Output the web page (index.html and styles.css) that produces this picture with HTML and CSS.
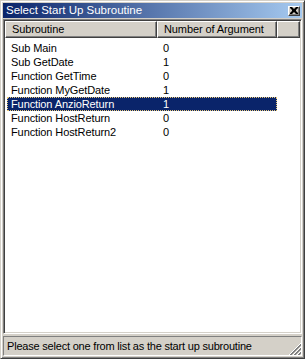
FILE: index.html
```html
<!DOCTYPE html>
<html lang="en-US">
  <head>
    <meta charset="UTF-8">
    <title>Select Start Up Subroutine</title>
    <link rel="stylesheet" href="styles.css">
  </head>
  <body>
    <div class="window">
      <div class="titlebar">
        <span class="title">Select Start Up Subroutine</span>
        <span class="close" aria-label="Close">
          <svg width="8" height="7" viewBox="0 0 8 7">
            <path d="M0 0h2l2 2 2-2h2v1l-2 2v1l2 2v1h-2l-2-2-2 2h-2v-1l2-2v-1l-2-2z" fill="#000"/>
          </svg>
        </span>
      </div>
      <div class="list">
        <div class="list-head">
          <div class="col col-name">Subroutine</div>
          <div class="col col-args">Number of Argument</div>
          <div class="col col-fill"></div>
        </div>
        <ul class="rows">
          <li class="row"><span class="cell-name">Sub Main</span><span class="cell-args">0</span></li>
          <li class="row"><span class="cell-name">Sub GetDate</span><span class="cell-args">1</span></li>
          <li class="row"><span class="cell-name">Function GetTime</span><span class="cell-args">0</span></li>
          <li class="row"><span class="cell-name">Function MyGetDate</span><span class="cell-args">1</span></li>
          <li class="row selected"><span class="cell-name">Function AnzioReturn</span><span class="cell-args">1</span></li>
          <li class="row"><span class="cell-name">Function HostReturn</span><span class="cell-args">0</span></li>
          <li class="row"><span class="cell-name">Function HostReturn2</span><span class="cell-args">0</span></li>
        </ul>
      </div>
      <div class="statusbar">
        <span class="status-text">Please select one from list as the start up subroutine</span>
        <!-- size grip -->
        <svg class="grip" width="12" height="12" viewBox="0 0 12 12" shape-rendering="crispEdges">
          <path d="M11 0h1v1h-1zM10 1h1v1h-1zM9 2h1v1h-1zM8 3h1v1h-1zM7 4h1v1h-1zM6 5h1v1h-1zM5 6h1v1h-1zM4 7h1v1h-1zM3 8h1v1h-1zM2 9h1v1h-1zM1 10h1v1h-1zM0 11h1v1h-1z" fill="#fff"/>
          <path d="M11 1h1v2h-1zM10 2h1v2h-1zM9 3h1v2h-1zM8 4h1v2h-1zM7 5h1v2h-1zM6 6h1v2h-1zM5 7h1v2h-1zM4 8h1v2h-1zM3 9h1v2h-1zM2 10h1v2h-1zM1 11h1v1h-1z" fill="#808080"/>
          <path d="M11 4h1v1h-1zM10 5h1v1h-1zM9 6h1v1h-1zM8 7h1v1h-1zM7 8h1v1h-1zM6 9h1v1h-1zM5 10h1v1h-1zM4 11h1v1h-1z" fill="#fff"/>
          <path d="M11 5h1v2h-1zM10 6h1v2h-1zM9 7h1v2h-1zM8 8h1v2h-1zM7 9h1v2h-1zM6 10h1v2h-1zM5 11h1v1h-1z" fill="#808080"/>
          <path d="M11 8h1v1h-1zM10 9h1v1h-1zM9 10h1v1h-1zM8 11h1v1h-1z" fill="#fff"/>
          <path d="M11 9h1v2h-1zM10 10h1v2h-1zM9 11h1v1h-1z" fill="#808080"/>
        </svg>
      </div>
    </div>
  </body>
</html>
```

FILE: styles.css
```css
body {
  margin: 0;
  padding: 0;
  background-color: #d4d0c8;
  font-family: "Liberation Sans", Arial, sans-serif;
  font-size: 11px;
  color: black;
}
.window {
  box-sizing: border-box;
  width: 305px;
  height: 359px;
  display: flex;
  flex-direction: column;
  padding: 2px;
  background: #d4d0c8;
  border: 1px solid;
  border-color: #d4d0c8 #404040 #404040 #d4d0c8;
  box-shadow: inset 1px 1px #fff, inset -1px -1px #808080;
}
.titlebar {
  height: 15px;
  display: flex;
  align-items: center;
  justify-content: space-between;
  padding: 0 2px 0 3px;
  background: linear-gradient(to right, #0a246a, #a6caf0);
  color: white;
}
.title {
  font-size: 11.5px;
  line-height: 15px;
}
.close {
  box-sizing: border-box;
  width: 12px;
  height: 10px;
  display: flex;
  align-items: center;
  justify-content: center;
  background: #d4d0c8;
  border: 1px solid;
  border-color: #fff #404040 #404040 #fff;
  box-shadow: inset -1px -1px #808080;
}
.list {
  flex: 1;
  margin-top: 1px;
  background: white;
  border: 1px solid;
  border-color: #808080 #fff #fff #808080;
  box-shadow: inset 1px 1px #404040, inset -1px -1px #d4d0c8;
  padding: 1px;
  overflow: hidden;
  letter-spacing: -0.1px;
}
.list-head {
  display: flex;
  height: 17px;
}
.col {
  box-sizing: border-box;
  height: 17px;
  line-height: 15px;
  padding-left: 6px;
  background: #d4d0c8;
  border: 1px solid;
  border-color: #fff #404040 #404040 #fff;
  box-shadow: inset -1px -1px #808080;
}
.col-name {
  width: 152px;
}
.col-args {
  width: 120px;
}
.col-fill {
  flex: 1;
}
.rows {
  list-style: none;
  margin: 3px 0 0 2px;
  padding: 0;
}
.row {
  display: flex;
  width: 270px;
  height: 14px;
  line-height: 14px;
}
.cell-name {
  width: 150px;
  padding-left: 4px;
}
.cell-args {
  padding-left: 2px;
}
.selected {
  box-sizing: border-box;
  background: #0a246a;
  color: white;
  outline: 1px dotted #e8c878;
  outline-offset: -1px;
}
.statusbar {
  position: relative;
  height: 18px;
  margin-top: 2px;
  display: flex;
  align-items: center;
  padding-left: 3px;
  border: 1px solid;
  border-color: #808080 #fff #fff #808080;
  letter-spacing: -0.2px;
}
.grip {
  position: absolute;
  right: 0;
  bottom: 0;
}
```
